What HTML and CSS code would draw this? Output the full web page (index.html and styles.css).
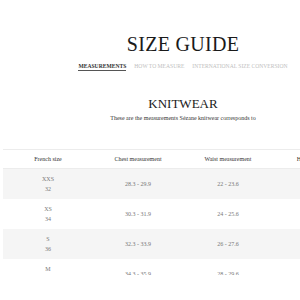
FILE: index.html
```html
<!DOCTYPE html>
<html>
<head>
<meta charset="utf-8">
<link rel="stylesheet" href="styles.css">
</head>
<body>
<div class="page">
  <h1 class="title">SIZE GUIDE</h1>
  <nav class="tabs">
    <span class="tab active">MEASUREMENTS</span>
    <span class="tab">HOW TO MEASURE</span>
    <span class="tab">INTERNATIONAL SIZE CONVERSION</span>
  </nav>
  <h2 class="section">KNITWEAR</h2>
  <p class="sub">These are the measurements Sézane knitwear corresponds to</p>
  <div class="table-wrap">
    <table class="sizes">
      <thead>
        <tr><th>French size</th><th>Chest measurement</th><th>Waist measurement</th><th>Hip measurement</th></tr>
      </thead>
      <tbody>
        <tr class="alt"><td>XXS<br>32</td><td>28.3 - 29.9</td><td>22 - 23.6</td><td>31.4 - 33</td></tr>
        <tr><td>XS<br>34</td><td>30.3 - 31.9</td><td>24 - 25.6</td><td>33.4 - 35</td></tr>
        <tr class="alt"><td>S<br>36</td><td>32.3 - 33.9</td><td>26 - 27.6</td><td>35.4 - 37</td></tr>
        <tr><td>M<br>38</td><td>34.3 - 35.9</td><td>28 - 29.6</td><td>37.4 - 39</td></tr>
      </tbody>
    </table>
  </div>
</div>
</body>
</html>
```
FILE: styles.css
```css
html, body {
  margin: 0;
  padding: 0;
  background: #fff;
  overflow: hidden;
}
body {
  font-family: "Liberation Serif", "Times New Roman", serif;
  color: #222;
}
.page {
  width: 360px;
  padding-left: 3px;
}
.title {
  margin: 32px 0 0;
  font-size: 20px;
  line-height: 24px;
  font-weight: normal;
  letter-spacing: 0.3px;
  text-align: center;
  color: #1a1a1a;
}
.tabs {
  margin-top: 7px;
  display: flex;
  justify-content: center;
  gap: 8px;
  font-size: 5.6px;
  line-height: 7px;
}
.tab {
  color: #c0c0c0;
}
.tab.active {
  color: #333;
  font-weight: bold;
  border-bottom: 1px solid #555;
}
.section {
  margin: 25px 0 0;
  font-size: 13px;
  line-height: 16px;
  font-weight: normal;
  text-align: center;
  color: #1a1a1a;
}
.sub {
  margin: 1.5px 0 0;
  font-size: 6px;
  line-height: 8px;
  text-align: center;
  color: #333;
}
.table-wrap {
  margin-top: 27px;
  height: 126px;
  overflow: hidden;
}
.sizes {
  width: 360px;
  border-collapse: collapse;
  table-layout: fixed;
}
.sizes th {
  height: 18px;
  padding: 0;
  font-size: 6px;
  font-weight: normal;
  color: #333;
  border-top: 1px solid #ececec;
  border-bottom: 1px solid #ececec;
}
.sizes td {
  height: 30px;
  padding: 0;
  text-align: center;
  font-size: 6px;
  line-height: 10px;
  color: #777;
}
.sizes tr.alt td {
  background: #f5f5f5;
}
```
